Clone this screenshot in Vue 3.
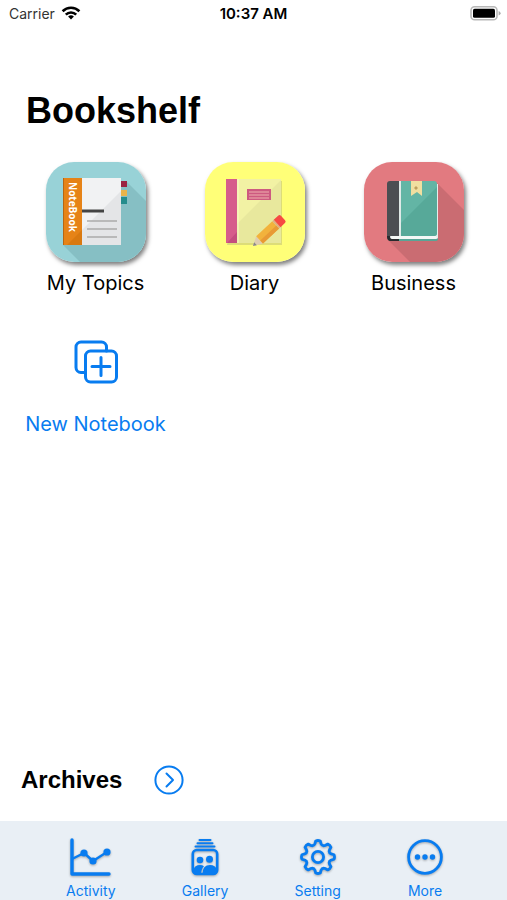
<template>
    <div class="screen">
        <header class="status">
            <div class="carrier">
                <span>Carrier</span>
                <svg width="20" height="16" viewBox="0 0 20 16" fill="none" stroke="#000" stroke-width="2.6">
                    <path d="M1.6 6.2a12 12 0 0 1 16.8 0" />
                    <path d="M4.8 9.6a7.4 7.4 0 0 1 10.4 0" />
                    <path d="M10 14.6l-2.9-3a4.2 4.2 0 0 1 5.8 0z" fill="#000" stroke="none" />
                </svg>
            </div>
            <strong class="time">10:37 AM</strong>
            <svg class="battery" width="31" height="16" viewBox="0 0 31 16">
                <rect x="1" y="1.8" width="26" height="13" rx="3.6" fill="#fff" stroke="#b8b8b8" stroke-width="1.6" />
                <rect x="3" y="3.8" width="22" height="9" rx="1.6" fill="#000" />
                <path d="M28.6 6v4.6q2-.8 2-2.3t-2-2.3z" fill="#aaa" />
            </svg>
        </header>

        <main class="content">
            <h1>Bookshelf</h1>
            <div class="shelf">
                <button type="button" class="book">
                    <svg class="cover" viewBox="0 0 100 100">
                        <rect width="100" height="100" fill="#98d2d7" />
                        <path d="M81 20L100 39V100H34L17 83z" fill="#86bfc4" />
                        <path d="M74 19h7v6h-7z" fill="#9b2342" />
                        <path d="M74 28h7v6h-7z" fill="#e9b44a" />
                        <path d="M74 35h7v7h-7z" fill="#258c8c" />
                        <path d="M17 16h58v67H17z" fill="#f1f2f3" />
                        <path d="M75 29v54H21z" fill="#e4e5e7" />
                        <path d="M17 16h19v67H17z" fill="#e68317" />
                        <path d="M36 68v15H21z" fill="#d97910" />
                        <path d="M17 16h1v67h-1z" fill="#b96612" />
                        <path d="M36 49h22" stroke="#444" stroke-width="3" />
                        <path d="M41 59h30M41 67h30M41 75h30" stroke="#aaa" stroke-width="1.6" />
                        <text class="cover-title" transform="translate(23 20) rotate(90)">NoteBook</text>
                    </svg>
                    <span>My Topics</span>
                </button>
                <button type="button" class="book">
                    <svg class="cover" viewBox="0 0 100 100">
                        <rect width="100" height="100" fill="#ffff78" />
                        <path d="M34 19h43v64H22z" fill="#dddd78" />
                        <path d="M32 17h44v64H32z" fill="#f2f2a4" />
                        <path d="M76 18v63H32V62z" fill="#e8e89d" />
                        <path d="M21 17h11v64H21z" fill="#d65d8b" />
                        <path d="M32 70v11H22z" fill="#c44e7e" />
                        <path d="M33 17v64" stroke="#fafac8" />
                        <path d="M42 27h24v11H42z" fill="#cd5a80" />
                        <path d="M44 30h20M44 33h20M44 36h20" stroke="#efb0ae" />
                        <g transform="translate(48 84) rotate(-43)">
                            <path d="M0 0L9-5v10z" fill="#dfcdb0" />
                            <path d="M0 0l3.4-2v4z" fill="#888" />
                            <path d="M9-5h22v10H9z" fill="#f2b23c" />
                            <path d="M9 1h22v4H9z" fill="#e89a35" />
                            <path d="M31-5h2v10h-2z" fill="#dfb080" />
                            <path d="M33-5h6q2 0 2 2v6q0 2-2 2h-6z" fill="#f64a43" />
                        </g>
                    </svg>
                    <span>Diary</span>
                </button>
                <button type="button" class="book">
                    <svg class="cover" viewBox="0 0 100 100">
                        <rect width="100" height="100" fill="#e27a80" />
                        <path d="M73 21L100 48V100H46L24 78z" fill="#ca6c72" />
                        <path d="M26 76h48v1q0 2-2 2H26z" fill="#58a596" />
                        <path d="M26 73h48v2q0 2-2 2H26z" fill="#f4f8f6" />
                        <path d="M72 22h2v53h-2z" fill="#e4efeb" />
                        <path d="M26 19h9v55h-8q-2 0-2 2t2 2h8v1h-8q-4 0-4-4V22q0-3 3-3z" fill="#4b4e52" />
                        <path d="M23 74q0 5 4 5h8v-2h-7q-2 0-2-3z" fill="#292b2e" />
                        <path d="M35 19h2v55h-2z" fill="#dfe9e7" />
                        <path d="M37 19h33q3 0 3 3v49q0 3-3 3H37z" fill="#63b5a5" />
                        <path d="M73 25v46q0 3-3 3H37V61z" fill="#57a999" />
                        <path d="M47 19h11v15l-5-4-6 4z" fill="#f0dfa0" />
                        <path d="M52 24l2 2-2 2-2-2z" fill="#bda05e" />
                    </svg>
                    <span>Business</span>
                </button>
                <button type="button" class="book add">
                    <svg width="44" height="44" viewBox="0 0 44 44" fill="none" stroke="currentColor" stroke-width="3" stroke-linecap="round">
                        <path d="M10.5 32.5H7a5 5 0 0 1-5-5V7a5 5 0 0 1 5-5h20.5a5 5 0 0 1 5 5v4" />
                        <rect x="11.5" y="11" width="31" height="31" rx="5" />
                        <path d="M18 26.500h18M27 17.500v18" />
                    </svg>
                    <span>New Notebook</span>
                </button>
            </div>
        </main>

        <section class="archives">
            <h2>Archives</h2>
            <button type="button" aria-label="Open archives">
                <svg width="30" height="30" viewBox="0 0 30 30" fill="none" stroke="currentColor" stroke-width="2" stroke-linecap="round" stroke-linejoin="round">
                    <circle cx="15" cy="15" r="13.6" />
                    <path d="M12.5 8.5l6.500 6.500-6.500 6.500" />
                </svg>
            </button>
        </section>

        <nav class="tabs">
            <button type="button">
                <svg width="42" height="42" viewBox="0 0 42 42" fill="none" stroke="currentColor" stroke-width="3.4" stroke-linecap="round" stroke-linejoin="round">
                    <path d="M2 4v34h37" />
                    <path d="M2 23l12-6 9 8 14-9" stroke-width="2.4" />
                    <g fill="currentColor" stroke="none">
                        <circle cx="14" cy="17" r="3.6" />
                        <circle cx="23" cy="25" r="3.6" />
                        <circle cx="37" cy="16" r="3.6" />
                    </g>
                </svg>
                <span>Activity</span>
            </button>
            <button type="button">
                <svg width="28" height="42" viewBox="0 0 28 42" fill="none" stroke="currentColor" stroke-linecap="round">
                    <path d="M8.5 4h11M6.5 7.3h15M4.5 10.6h19" stroke-width="2" />
                    <rect x="1.8" y="14" width="24.4" height="24" rx="4" stroke-width="2.6" />
                    <g fill="currentColor" stroke="none">
                        <circle cx="9" cy="24" r="3.3" />
                        <circle cx="18.5" cy="23.3" r="3.5" />
                        <path d="M2.5 34q1-5 6.500-5 2.500 0 4 1.300-2.500 2.200-3 7.700H5q-2.500 0-2.500-4z" />
                        <path d="M11.5 38q0-9 7.500-9 5.500 0 7 5 0 4-3 4z" />
                    </g>
                </svg>
                <span>Gallery</span>
            </button>
            <button type="button">
                <svg width="42" height="42" viewBox="0 0 42 42" fill="none" stroke="currentColor" stroke-width="2.8" stroke-linejoin="round">
                    <path :d="gear" />
                    <circle cx="21" cy="21" r="5.6" />
                </svg>
                <span>Setting</span>
            </button>
            <button type="button">
                <svg width="36" height="42" viewBox="0 0 36 42">
                    <circle cx="18" cy="21" r="16.4" fill="none" stroke="currentColor" stroke-width="2.8" />
                    <g fill="currentColor">
                        <circle cx="10.5" cy="21" r="2.7" />
                        <circle cx="18" cy="21" r="2.7" />
                        <circle cx="25.5" cy="21" r="2.7" />
                    </g>
                </svg>
                <span>More</span>
            </button>
        </nav>
    </div>
</template>

<script setup>
const point = (radius, angle) => {
    const rad = angle * Math.PI / 180
    return `${(21 + radius * Math.cos(rad)).toFixed(2)} ${(21 + radius * Math.sin(rad)).toFixed(2)}`
}

// eight rounded teeth joined by curved valleys
const makeGear = () => {
    let d = `M${point(16.2, -8)}`
    for (let i = 0; i < 8; i++) {
        const a = i * 45
        d += `Q${point(17, a)} ${point(16.2, a + 8)}`
        d += `L${point(13.6, a + 13)}Q${point(11.2, a + 22.5)} ${point(13.6, a + 32)}`
        d += `L${point(16.2, a + 37)}`
    }
    return d + 'Z'
}
const gear = makeGear()
</script>

<style>
    body {
        margin: 0;
        background: #fff;
    }
</style>

<style scoped>
    .screen {
        display: flex;
        flex-direction: column;
        min-height: 100vh;
        color: #000;
        font-family: Inter, "Liberation Sans", sans-serif;
    }
    button {
        padding: 0;
        border: none;
        background: none;
        color: inherit;
        font: inherit;
        cursor: pointer;
    }
    svg {
        display: block;
    }
    .status {
        display: grid;
        grid-template-columns: 1fr auto 1fr;
        align-items: center;
        height: 26px;
        padding: 0 6px;
        font-size: 14px;
    }
    .carrier {
        display: flex;
        align-items: center;
        gap: 6px;
        padding-left: 3px;
        color: #333;
    }
    .time {
        font-size: 15px;
        font-weight: 600;
    }
    .battery {
        justify-self: end;
    }
    .content {
        flex: 1;
        padding: 63px 14px 0 16px;
    }
    h1 {
        margin: 0 10px 29px;
        font-family: "Liberation Sans", sans-serif;
        font-size: 36px;
        line-height: 44px;
    }
    .shelf {
        display: grid;
        grid-template-columns: repeat(3, 1fr);
    }
    .book {
        display: flex;
        flex-direction: column;
        align-items: center;
        gap: 9px;
        font-size: 20px;
        line-height: 24px;
    }
    .cover {
        width: 100px;
        height: 100px;
        border-radius: 28px;
        box-shadow: 2px 3px 4px rgba(0, 0, 0, 0.5);
    }
    .cover-title {
        fill: #fff;
        font: bold 10px "Open Sans", sans-serif;
    }
    .add {
        gap: 28px;
        padding-top: 45px;
        color: #087cf0;
        white-space: nowrap;
    }
    .archives {
        display: flex;
        align-items: center;
        gap: 32px;
        padding: 0 21px 26px;
    }
    .archives button {
        color: #087cf0;
    }
    h2 {
        margin: 0;
        font-family: "Liberation Sans", sans-serif;
        font-size: 24px;
        line-height: 30px;
    }
    .tabs {
        display: flex;
        justify-content: space-between;
        padding: 15px 64px 0 66px;
        background: #e9eff5;
        color: #087cf0;
    }
    .tabs button {
        display: flex;
        flex-direction: column;
        align-items: center;
        gap: 4px;
        font-size: 14px;
        line-height: 18px;
    }
    .tabs svg {
        filter: drop-shadow(0 1px 1px rgba(0, 0, 0, 0.3));
    }
</style>
